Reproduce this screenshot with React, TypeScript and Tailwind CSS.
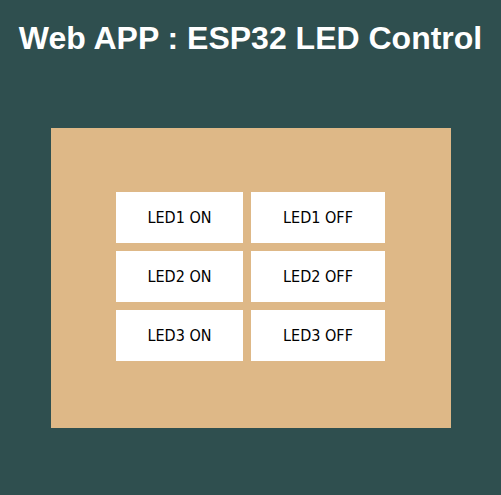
import React from "react";

const leds = ["LED1", "LED2", "LED3"];

function LedButton({ label }: { label: string }) {
  return (
    <button
      type="button"
      className="h-[51px] cursor-pointer bg-white px-4 pt-0.5 font-['DejaVu_Sans_Condensed','DejaVu_Sans',sans-serif] text-base whitespace-nowrap text-black hover:bg-gray-200"
    >
      {label}
    </button>
  );
}

export default function App() {
  return (
    <main className="min-h-screen bg-[#2f4f4f]">
      <h1 className="pt-5 text-center font-['Liberation_Sans',Arial,sans-serif] text-[32px] leading-9 font-bold whitespace-nowrap text-white">
        Web APP : ESP32 LED Control
      </h1>
      <section className="mx-auto mt-18 flex min-h-[300px] w-4/5 max-w-[400px] items-center justify-center bg-[#deb887] pb-1">
        <div className="grid grid-cols-[127px_134px] gap-2">
          {leds.map((led) => (
            <React.Fragment key={led}>
              <LedButton label={`${led} ON`} />
              <LedButton label={`${led} OFF`} />
            </React.Fragment>
          ))}
        </div>
      </section>
    </main>
  );
}
